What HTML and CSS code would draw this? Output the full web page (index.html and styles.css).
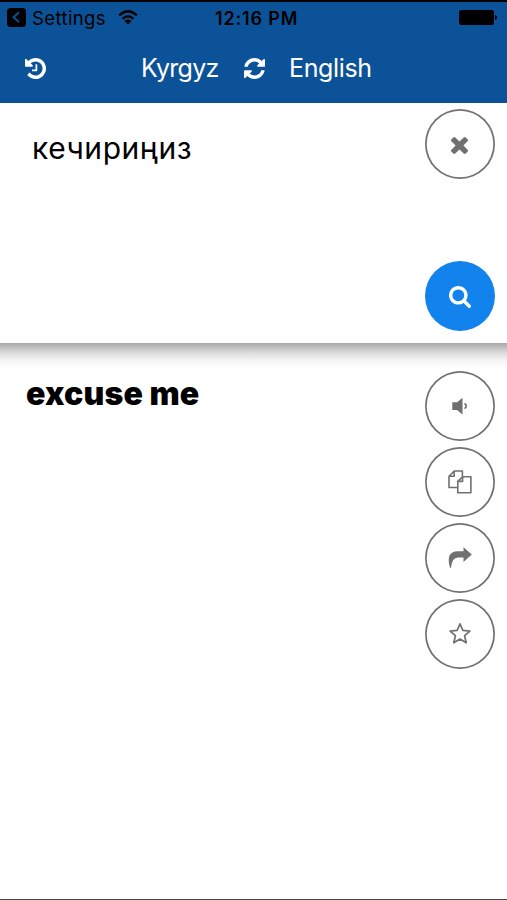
FILE: index.html
```
<!DOCTYPE html>
<html lang="en">
<head>
<meta charset="utf-8">
<title>Kyrgyz English Translator</title>
<link rel="stylesheet" href="styles.css">
</head>
<body>
<div class="app">
  <header class="header">
    <div class="status">
      <div class="status-left">
        <svg class="back" viewBox="0 0 19 19"><rect width="19" height="19" rx="3.5"/><path d="M12 4.300 6.500 9.200l5.500 4.900" fill="none" stroke="#0c5298" stroke-width="1.900"/></svg>
        <span class="settings">Settings</span>
        <svg class="wifi" viewBox="0 0 20 15"><g fill="none" stroke="#000" stroke-width="2.300"><path d="M1.200 5.400Q10-2.800 18.800 5.400"/><path d="M4.500 8.800q5.500-5 11 0"/></g><path d="M6.500 10.900q3.500-2.700 7 0L10 14.500z"/></svg>
      </div>
      <span class="time">12:16 PM</span>
      <svg class="battery" viewBox="0 0 38 15"><rect width="35" height="15" rx="2.500"/><path d="M36 5q2 .4 2 2.500T36 10z"/></svg>
    </div>
    <nav class="nav">
      <svg class="history" viewBox="128 128 1536 1536"><path d="M1664 896q0 156-61 298t-164 245-245 164-298 61q-172 0-327-72.500t-264-204.500q-7-10-6.500-22.500t8.500-20.500l137-138q10-9 25-9 16 2 23 12 73 95 179 147t225 52q104 0 198.500-40.500t163.500-109.500 109.500-163.500 40.500-198.500-40.500-198.500-109.500-163.500-163.500-109.500-198.500-40.500q-98 0-188 35.500t-160 101.500l137 138q31 30 14 69-17 40-59 40h-448q-26 0-45-19t-19-45v-448q0-42 40-59 39-17 69 14l130 129q107-101 244.500-156.500t284.500-55.500q156 0 298 61t245 164 164 245 61 298zm-640-288v448q0 14-9 23t-23 9h-320q-14 0-23-9t-9-23v-64q0-14 9-23t23-9h224v-352q0-14 9-23t23-9h64q14 0 23 9t9 23z"/></svg>
      <span class="lang from">Kyrgyz</span>
      <svg class="swap" viewBox="128 128 1536 1536"><path d="M1639 1056q0 5-1 7-64 268-268 434.500t-478 166.500q-146 0-282.500-55t-243.500-157l-129 129q-19 19-45 19t-45-19-19-45v-448q0-26 19-45t45-19h448q26 0 45 19t19 45-19 45l-137 137q71 66 161 102t187 36q134 0 250-65t186-179q11-17 53-117 8-23 30-23h192q13 0 22.500 9.500t9.500 22.500zm25-800v448q0 26-19 45t-45 19h-448q-26 0-45-19t-19-45 19-45l138-138q-148-137-349-137-134 0-250 65t-186 179q-11 17-53 117-8 23-30 23h-199q-13 0-22.500-9.500t-9.500-22.500v-7q65-268 270-434.500t480-166.500q146 0 284 55.500t245 156.500l130-129q19-19 45-19t45 19 19 45z"/></svg>
      <span class="lang to">English</span>
    </nav>
  </header>
  <section class="source">
    <div class="source-text">кечириңиз</div>
    <div class="source-actions">
      <button class="round" aria-label="Clear"><svg class="i16" viewBox="302 366 1188 1188"><path d="M1490 1322q0 40-28 68l-136 136q-28 28-68 28t-68-28l-294-294-294 294q-28 28-68 28t-68-28l-136-136q-28-28-28-68t28-68l294-294-294-294q-28-28-28-68t28-68l136-136q28-28 68-28t68 28l294 294 294-294q28-28 68-28t68 28l136 136q28 28 28 68t-28 68l-294 294 294 294q28 28 28 68z"/></svg></button>
      <button class="round search" aria-label="Search"><svg class="i22" viewBox="64 128 1664 1664"><path d="M1216 832q0-185-131.500-316.500t-316.500-131.500-316.500 131.500-131.500 316.500 131.500 316.500 316.500 131.500 316.500-131.500 131.500-316.500zm512 832q0 52-38 90t-90 38q-54 0-90-38l-343-342q-179 124-399 124-143 0-273.500-55.500t-225-150-150-225-55.500-273.500 55.500-273.500 150-225 225-150 273.500-55.500 273.500 55.500 225 150 150 225 55.500 273.500q0 220-124 399l343 343q37 37 37 90z"/></svg></button>
    </div>
  </section>
  <section class="result">
    <div class="result-text">excuse me</div>
    <div class="result-actions">
      <button class="round" aria-label="Listen"><svg class="i24" viewBox="0 0 24 24"><path d="M4.300 8.200h4.800l5.400-4.400v16.700l-5.400-4.400H4.300z"/><path d="M16.600 9.500q3.200 2.600 0 5.200" fill="none" stroke="#707070" stroke-width="1.700"/></svg></button>
      <button class="round" aria-label="Copy"><svg class="i24" viewBox="0 0 24 24"><g fill="none" stroke="#707070" stroke-width="1.600" stroke-linejoin="round"><path d="M9 17.500H1V6.200L6.200 1h8.200v5.700M6.200 1v5.200H1M9.800 11.400 14.600 6.700h8.300v16.100H9.800zM14.600 6.700v4.700H9.800"/></g></svg></button>
      <button class="round" aria-label="Share"><svg class="i24" viewBox="0 0 24 24"><path d="M15.500 1.200 23.800 8.500l-8.300 7.400v-4.300H10q-6.100.1-7 10.100h-1Q-2.600 5.700 9.500 5.300h6z"/></svg></button>
      <button class="round" aria-label="Favorite"><svg class="i24" viewBox="0 0 24 24"><path d="m12 1.900 2.900 6.500 7 .7-5.300 4.600 1.600 7.100-6.200-3.700-6.200 3.700 1.600-7.100-5.300-4.600 7-.7z" fill="none" stroke="#707070" stroke-width="1.700" stroke-linejoin="round"/></svg></button>
    </div>
  </section>
</div>
</body>
</html>
```
FILE: styles.css
```
* { box-sizing: border-box; }
body { margin: 0; background: #fff; font-family: Inter, "Liberation Sans", sans-serif; color: #000; }
svg { display: block; flex: none; overflow: visible; }
.app { height: 900px; display: flex; flex-direction: column; border-bottom: 1px solid #444; overflow: hidden; }
.header { height: 102.500px; flex: none; background: #0c5298; border-top: 2px solid #000; }
.status { height: 32px; display: grid; grid-template-columns: 208px 1fr auto; padding: 0 10px 0 7px; align-items: center; }
.status-left { display: flex; align-items: center; }
.back { width: 19px; height: 19px; margin-top: -1px; }
.settings { margin-left: 6px; width: 74px; margin-top: -1px; font-size: 18.500px; line-height: 22px; letter-spacing: .4px; white-space: nowrap; }
.wifi { width: 20px; height: 15px; margin-left: 12px; margin-top: -2px; }
.time { font-size: 18px; font-weight: 600; line-height: 22px; letter-spacing: .85px; padding-top: 1px; }
.battery { width: 38px; height: 15px; margin-top: -1px; }
.nav { height: 68px; padding-left: 25px; display: flex; align-items: center; color: #fff; }
.nav svg { fill: #fff; }
.history { width: 21px; height: 21px; }
.lang { font-size: 25px; line-height: 34px; white-space: nowrap; }
.from { margin-left: 95px; width: 78px; letter-spacing: -.75px; }
.swap { width: 21px; height: 21px; margin-left: 24.500px; }
.to { margin-left: 24.500px; letter-spacing: -.35px; }
.source { height: 240.500px; flex: none; display: flex; justify-content: space-between; padding: 6.500px 12.500px 12.500px 32px; background: #fff; }
.source-text { padding-top: 20px; font-size: 30px; line-height: 38px; letter-spacing: .55px; }
.source-actions { display: flex; flex-direction: column; justify-content: space-between; }
.round { width: 70px; height: 70px; padding: 0; display: flex; align-items: center; justify-content: center; border: 0; border-radius: 50%; background: #fff; box-shadow: inset 0 0 0 1.700px #707070; }
.round svg { fill: #707070; }
.round.search { background: #1283ed; box-shadow: none; }
.search svg { fill: #fff; }
.i16 { width: 17px; height: 17px; position: relative; top: 1px; }
.i22 { width: 22px; height: 22px; position: relative; top: 1px; }
.i24 { width: 24px; height: 24px; }
.result { flex: 1; display: flex; justify-content: space-between; padding: 28px 12.500px 0 26px; background: linear-gradient(#a8a8a8 0, #bcbcbc 4px, #dcdcdc 10px, #f3f3f3 17px, #fff 26px); }
.result-text { padding-top: 3px; font-size: 32px; line-height: 40px; font-weight: 900; letter-spacing: .15px; }
.result-actions { display: flex; flex-direction: column; gap: 6px; }
```
